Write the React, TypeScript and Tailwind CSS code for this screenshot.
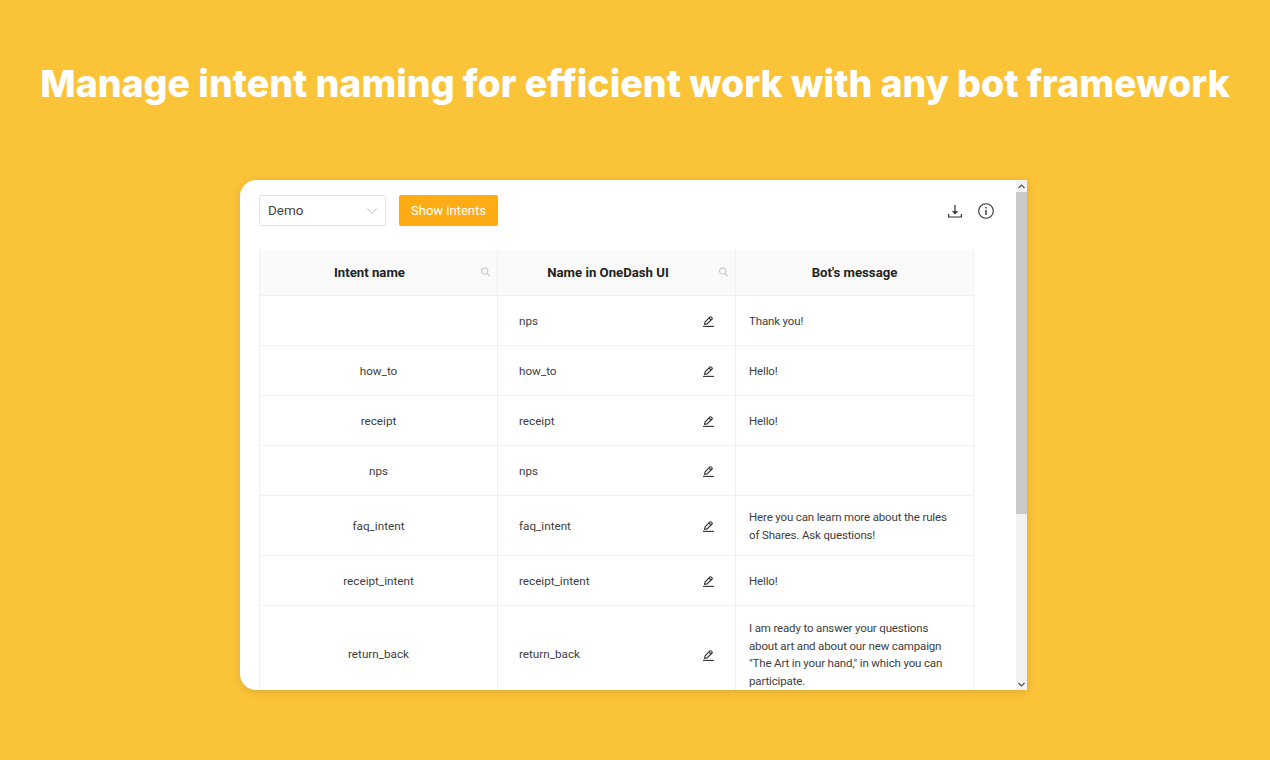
import React from "react";

function Pencil() {
  return (
    <svg width="11" height="11" viewBox="0 0 11 11" fill="none" stroke="#333" strokeWidth="1.1" className="shrink-0">
      <path d="M0 10.4H11" />
      <path d="M1.6 8.3L2 6L6.9 0.9C7.2 0.6 7.7 0.6 8 0.9L9.1 1.9C9.4 2.2 9.4 2.7 9.1 3L4.1 7.9L1.6 8.3Z" />
      <path d="M6 2L8 4" />
    </svg>
  );
}

function Search() {
  return (
    <svg width="9" height="10" viewBox="0 0 9 10" fill="none" stroke="#c8c8c8" strokeWidth="1.2" className="shrink-0">
      <circle cx="3.7" cy="3.9" r="3.1" />
      <path d="M6 6.3L8.7 9.4" />
    </svg>
  );
}

const rows = [
  { a: "", b: "nps", c: ["Thank you!"], h: "h-[50px]" },
  { a: "how_to", b: "how_to", c: ["Hello!"], h: "h-[50px]" },
  { a: "receipt", b: "receipt", c: ["Hello!"], h: "h-[50px]" },
  { a: "nps", b: "nps", c: [], h: "h-[50px]" },
  { a: "faq_intent", b: "faq_intent", c: ["Here you can learn more about the rules", "of Shares. Ask questions!"], h: "h-[60px]" },
  { a: "receipt_intent", b: "receipt_intent", c: ["Hello!"], h: "h-[50px]" },
  {
    a: "return_back",
    b: "return_back",
    c: ["I am ready to answer your questions", "about art and about our new campaign", "\"The Art in your hand,\" in which you can", "participate."],
    h: "h-[97px]",
  },
];

export default function App() {
  return (
    <div className="w-[1270px] h-[760px] overflow-hidden bg-[#fbc338] font-['Roboto',sans-serif]">
      <h1 className="pt-[60px] h-[180px] text-center text-white text-[37.5px] leading-[48px] font-extrabold whitespace-nowrap font-['Inter',sans-serif]">
        Manage intent naming for efficient work with any bot framework
      </h1>
      <div className="ml-[240px] w-[787px] h-[510px] bg-white rounded-l-2xl shadow-[0_2px_8px_rgba(0,0,0,0.12)] flex overflow-hidden">
        <div className="flex-1 pl-[19px] pr-[22px] overflow-hidden">
          <div className="h-[70px] flex items-start pt-[15px]">
            <div className="w-[127px] h-[31px] border border-[#e3e3e3] rounded-[2px] flex items-center justify-between pl-2 pr-2 text-[13.5px] text-[#444]">
              <span>Demo</span>
              <svg width="10" height="6" viewBox="0 0 10 6" fill="none" stroke="#bdbdbd" strokeWidth="1">
                <path d="M0.5 0.5L5 5.5L9.5 0.5" />
              </svg>
            </div>
            <div className="ml-[13px] w-[99px] h-[31px] bg-[#feac15] rounded-[2px] flex items-center justify-center text-white text-[13px]">
              Show intents
            </div>
            <div className="ml-auto flex items-center gap-[16px] pt-[8px]">
              <svg width="14" height="14" viewBox="0 0 14 14" fill="none" stroke="#333" strokeWidth="1.2">
                <path d="M7 1V9.5" />
                <path d="M4.6 7.2L7 9.6L9.4 7.2" fill="#333" />
                <path d="M0.6 10V13H13.4V10" />
              </svg>
              <svg width="16" height="16" viewBox="0 0 16 16" fill="none" stroke="#333" strokeWidth="1.1">
                <circle cx="8" cy="8" r="7.3" />
                <path d="M8 7V12" strokeWidth="1.4" />
                <path d="M8 4V5.4" strokeWidth="1.5" />
              </svg>
            </div>
          </div>
          <div className="w-[715px] border-l border-r border-[#f0f0f0] text-[11.7px] text-[#3d3d3d]">
            <div className="grid grid-cols-[238px_238px_237px] h-[46px] bg-[#fafafa] border-b border-[#f0f0f0] font-bold text-[13.2px] text-[#222]">
              <div className="relative flex items-center justify-center pr-[18px] border-r border-[#f0f0f0]">
                Intent name
                <span className="absolute right-[7px] top-[17px]"><Search /></span>
              </div>
              <div className="relative flex items-center justify-center pr-[17px] border-r border-[#f0f0f0]">
                Name in OneDash UI
                <span className="absolute right-[7px] top-[17px]"><Search /></span>
              </div>
              <div className="flex items-center justify-center">Bot's message</div>
            </div>
            {rows.map((r, i) => (
              <div key={i} className={`grid grid-cols-[238px_238px_237px] border-b border-[#f0f0f0] ${r.h}`}>
                <div className="flex items-center justify-center pt-[2px] border-r border-[#f0f0f0]">{r.a}</div>
                <div className="flex items-center justify-between pl-[21px] pr-[21px] pt-[2px] border-r border-[#f0f0f0]">
                  <span>{r.b}</span>
                  <Pencil />
                </div>
                <div className="flex flex-col justify-center pl-[13px] pt-[2px] text-[11.5px] tracking-[-0.15px] leading-[17.5px] whitespace-nowrap">
                  {r.c.map((l) => (
                    <div key={l}>{l}</div>
                  ))}
                </div>
              </div>
            ))}
          </div>
        </div>
        <div className="w-[11px] bg-[#f1f1f1] flex flex-col shrink-0">
          <div className="h-[12px] flex items-center justify-center">
            <svg width="7" height="5" viewBox="0 0 7 5" fill="none" stroke="#555" strokeWidth="1.2"><path d="M0.5 4L3.5 1L6.5 4" /></svg>
          </div>
          <div className="h-[322px] bg-[#c9c9c9]" />
          <div className="flex-1" />
          <div className="h-[12px] flex items-center justify-center">
            <svg width="7" height="5" viewBox="0 0 7 5" fill="none" stroke="#555" strokeWidth="1.2"><path d="M0.5 1L3.5 4L6.5 1" /></svg>
          </div>
        </div>
      </div>
    </div>
  );
}
